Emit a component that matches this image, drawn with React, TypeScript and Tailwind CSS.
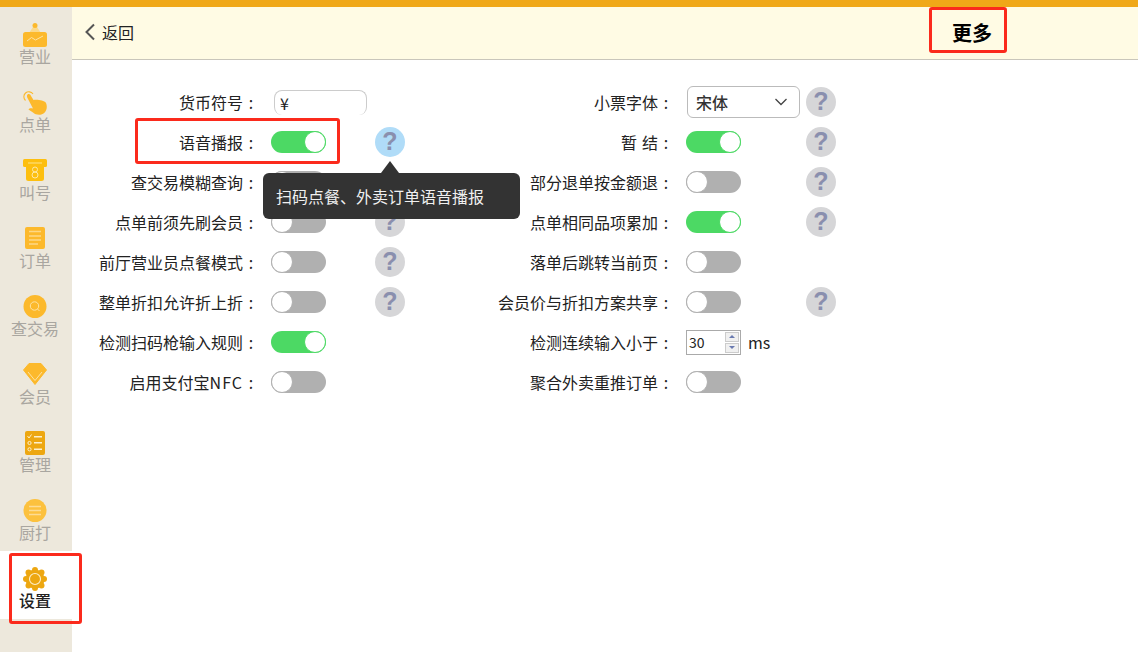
import React from 'react'

const FONT = '[font-family:"Noto_Sans_CJK_SC","Liberation_Sans",sans-serif]'

// sidebar icons, all on a 24 box
function IconBiz() {
  return (
    <svg width="24" height="24" viewBox="0 0 24 24">
      <path d="M12 1 L6 10 H18 Z" fill="#fbd98a" />
      <circle cx="12" cy="2.500" r="2.500" fill="#fcb92c" />
      <rect x="0" y="9" width="24" height="15" rx="2.500" fill="#fcb92c" />
      <path d="M4 18 L8.500 14.500 L12.500 17 L20 13" stroke="#fde3a4" strokeWidth="1" fill="none" />
    </svg>
  )
}

function IconHand() {
  return (
    <svg width="24" height="24" viewBox="0 0 24 24">
      <path d="M2.500 9.500 A5 5 0 1 1 10 3" stroke="#fcb92c" strokeWidth="1.100" fill="none" />
      <path d="M4.500 3.500 C6 2.500 7.500 3.500 8 5 L10.500 9 C14 8.500 21 9 23 12 C24.500 15 24 20 20.500 22.500 C17.500 24.500 12.500 24 10 21.500 L5.500 18.500 C6 17 8.500 17 10 17.500 L5 8 C4 6.500 3.500 4.500 4.500 3.500 Z" fill="#fcb92c" />
    </svg>
  )
}

function IconCall() {
  return (
    <svg width="24" height="24" viewBox="0 0 24 24">
      <rect x="0" y="0" width="24" height="8" rx="1.500" fill="#fdbf0f" />
      <path d="M3 6 H21 V19.500 A2.500 2.500 0 0 1 18.500 22 H5.500 A2.500 2.500 0 0 1 3 19.500 Z" fill="#fdbf0f" />
      <path d="M5 4 H19" stroke="#fde48c" strokeWidth="1" />
      <circle cx="12" cy="10.500" r="2.500" stroke="#fde9a8" strokeWidth="1" fill="none" />
      <circle cx="12" cy="16" r="3" stroke="#fde9a8" strokeWidth="1" fill="none" />
    </svg>
  )
}

function IconOrder() {
  return (
    <svg width="24" height="24" viewBox="0 0 24 24">
      <rect x="2" y="0" width="20" height="22" rx="2" fill="#fcb92c" />
      <path d="M6 4.500 H18 M6 9 H18 M6 13 H18 M6 17 H15" stroke="#fdd886" strokeWidth="1.300" />
    </svg>
  )
}

function IconSearch() {
  return (
    <svg width="24" height="24" viewBox="0 0 24 24">
      <circle cx="12" cy="11.500" r="11.500" fill="#fcb92c" />
      <circle cx="11.500" cy="11" r="4.200" stroke="#fde3a4" strokeWidth="1" fill="none" />
      <path d="M14.500 14 L16.500 16" stroke="#fde3a4" strokeWidth="1" />
    </svg>
  )
}

function IconDiamond() {
  return (
    <svg width="24" height="24" viewBox="0 0 24 24">
      <path d="M6 0.500 H18 L23.500 7 L12 21.500 L0.500 7 Z" fill="#fcb92c" stroke="#fcb92c" strokeLinejoin="round" />
      <path d="M5 9 L12 17.500 L19 9" stroke="#fde3a4" strokeWidth="1" fill="none" />
    </svg>
  )
}

function IconManage() {
  return (
    <svg width="24" height="24" viewBox="0 0 24 24">
      <rect x="2" y="0" width="20" height="24" rx="2" fill="#eda711" />
      <path d="M4.500 5 L6 7 L8.500 3.500" stroke="#fdf0cc" strokeWidth="1" fill="none" />
      <circle cx="6.500" cy="12" r="1.600" stroke="#fdf0cc" strokeWidth="1" fill="none" />
      <circle cx="6.500" cy="18.300" r="1.600" stroke="#fdf0cc" strokeWidth="1" fill="none" />
      <path d="M11 5.700 H19 M11 11.700 H19 M11 18.300 H19" stroke="#fdf0cc" strokeWidth="1.500" />
    </svg>
  )
}

function IconPrint() {
  return (
    <svg width="24" height="24" viewBox="0 0 24 24">
      <circle cx="12" cy="11.500" r="11.500" fill="#fcc13e" />
      <path d="M6 7.500 H18 M6 11.500 H18 M6 15.500 H18" stroke="#fddc94" strokeWidth="1.400" />
    </svg>
  )
}

function IconGear() {
  return (
    <svg width="24" height="24" viewBox="0 0 24 24">
      <g fill="#eda711">
        <circle cx="12" cy="12" r="9.500" />
        <circle cx="12" cy="3" r="3" />
        <circle cx="12" cy="21" r="3" />
        <circle cx="3" cy="12" r="3" />
        <circle cx="21" cy="12" r="3" />
        <circle cx="5.500" cy="5.500" r="3" />
        <circle cx="18.500" cy="5.500" r="3" />
        <circle cx="5.500" cy="18.500" r="3" />
        <circle cx="18.500" cy="18.500" r="3" />
      </g>
      <circle cx="12" cy="12" r="5.500" fill="none" stroke="#fdf0cc" strokeWidth="1.100" />
    </svg>
  )
}

const navItems = [
  { label: '营业', icon: <IconBiz /> },
  { label: '点单', icon: <IconHand /> },
  { label: '叫号', icon: <IconCall /> },
  { label: '订单', icon: <IconOrder /> },
  { label: '查交易', icon: <IconSearch /> },
  { label: '会员', icon: <IconDiamond /> },
  { label: '管理', icon: <IconManage /> },
  { label: '厨打', icon: <IconPrint /> },
  { label: '设置', icon: <IconGear />, active: true },
]

function Toggle({ on }: { on?: boolean }) {
  return (
    <div className={on ? 'flex h-[22px] w-[55px] justify-end rounded-full bg-[#4cd964]' : 'flex h-[22px] w-[55px] justify-start rounded-full bg-[#b0b0b0]'}>
      <div className={on ? 'h-[22px] w-[22px] rounded-full border border-[#4cd964] bg-white' : 'h-[22px] w-[22px] rounded-full border border-[#b0b0b0] bg-white'} />
    </div>
  )
}

function Help({ active }: { active?: boolean }) {
  return (
    <div className={active ? 'flex h-[30px] w-[30px] items-center justify-center rounded-full bg-[#b0dcf8] font-["Liberation_Sans"] text-[25px] font-bold text-[#8a8fae]' : 'flex h-[30px] w-[30px] items-center justify-center rounded-full bg-[#d6d6d8] font-["Liberation_Sans"] text-[25px] font-bold text-[#8a8fae]'}>
      ?
    </div>
  )
}

function Row({ label, control, help, wide, helpActive }: { label: React.ReactNode; control: React.ReactNode; help?: boolean; wide?: boolean; helpActive?: boolean }) {
  return (
    <div className="flex h-10 items-center">
      <div className={wide ? 'flex w-[176px] justify-end whitespace-pre text-[16px] text-[#222]' : 'flex w-[160px] justify-end whitespace-pre text-[16px] text-[#222]'}>
        <span>{label}</span>
        <span className="w-4 text-center">:</span>
      </div>
      <div className={wide ? 'ml-3 w-[120px] shrink-0' : 'ml-3 w-[104px] shrink-0'}>{control}</div>
      {help && <Help active={helpActive} />}
    </div>
  )
}

export default function App() {
  return (
    <div className={`relative flex h-[652px] w-[1138px] flex-col overflow-hidden bg-white ${FONT}`}>
      <div className="h-[7px] shrink-0 bg-[#f0a818]" />
      <div className="flex flex-1">
        <aside className="flex w-[72px] shrink-0 flex-col bg-[#ede8dc]">
          {navItems.map((item) => (
            <div key={item.label} className={item.active ? 'flex h-[68px] flex-col items-center bg-white pr-[2px] pt-4' : 'flex h-[68px] flex-col items-center pr-[2px] pt-4'}>
              <div className="h-6 w-6">{item.icon}</div>
              <div className={item.active ? 'mt-[-3px] text-[16px] font-medium leading-6 text-[#222]' : 'mt-[-3px] text-[16px] leading-6 text-[#a9a6a0]'}>
                {item.label}
              </div>
            </div>
          ))}
        </aside>

        <main className="flex-1">
          <header className="flex h-[53px] items-center border-b border-[#c9c6bb] bg-[#fffbe4]">
            <svg width="12" height="18" viewBox="0 0 12 18" className="ml-[12px] -mt-[2px]">
              <path d="M10 1.500 L2.500 9 L10 16.500" stroke="#555" strokeWidth="2" fill="none" />
            </svg>
            <span className="ml-[6px] -mt-[3px] text-[16px] text-[#222]">返回</span>
            <span className="ml-[818px] text-[20px] font-bold text-black">更多</span>
          </header>

          <div className="relative flex pl-[27px] pt-[22px]">
            <div className="w-[399px]">
              <Row
                label="货币符号"
                control={
                  <div className="ml-[3px] flex h-[25px] w-[93px] items-center rounded-lg border border-b-0 border-[#ccc] pl-[5px] text-[16px] text-[#222]">
                    ¥
                  </div>
                }
              />
              <Row label="语音播报" control={<Toggle on />} help helpActive />
              <Row label="查交易模糊查询" control={<Toggle />} />
              <Row label="点单前须先刷会员" control={<Toggle />} help />
              <Row label="前厅营业员点餐模式" control={<Toggle />} help />
              <Row label="整单折扣允许折上折" control={<Toggle />} help />
              <Row label="检测扫码枪输入规则" control={<Toggle on />} />
              <Row label={<>启用支付宝<span className="tracking-[1px]">NFC</span></>} control={<Toggle />} />
            </div>
            <div>
              <Row
                wide
                label="小票字体"
                control={
                  <div className="ml-px flex h-8 w-[113px] items-center justify-between rounded-md border border-[#bbb] px-2 text-[16px] font-medium text-[#333]">
                    宋体
                    <svg width="14" height="8" viewBox="0 0 14 8" className="mr-[3px]">
                      <path d="M1.500 1 L7 6.500 L12.500 1" stroke="#444" strokeWidth="1.300" fill="none" />
                    </svg>
                  </div>
                }
                help
              />
              <Row wide label={<>暂<span className="ml-[5px]">结</span></>} control={<Toggle on />} help />
              <Row wide label="部分退单按金额退" control={<Toggle />} help />
              <Row wide label="点单相同品项累加" control={<Toggle on />} help />
              <Row wide label="落单后跳转当前页" control={<Toggle />} />
              <Row wide label="会员价与折扣方案共享" control={<Toggle />} help />
              <Row
                wide
                label="检测连续输入小于"
                control={
                  <div className="flex items-center">
                    <div className="flex h-[25px] w-[55px] items-center justify-between border border-[#aaa] pl-[2px] pr-px text-[14px] text-[#222]">
                      30
                      <div className="flex w-[14px] flex-col gap-px">
                        <div className="flex h-[10px] items-center justify-center border border-[#ccc] bg-[#f0f0f0]">
                          <div className="border-x-[3px] border-b-[3px] border-x-transparent border-b-[#6a7ab0]" />
                        </div>
                        <div className="flex h-[10px] items-center justify-center border border-[#ccc] bg-[#f0f0f0]">
                          <div className="border-x-[3px] border-t-[3px] border-x-transparent border-t-[#6a7ab0]" />
                        </div>
                      </div>
                    </div>
                    <span className="ml-[7px] text-[16px] text-[#222]">ms</span>
                  </div>
                }
              />
              <Row wide label="聚合外卖重推订单" control={<Toggle />} />
            </div>

            {/* tooltip over the rows */}
            <div className="absolute left-[191px] top-[113px] flex h-[46px] w-[257px] items-center rounded-md bg-[#333] pl-[13px] text-[16px] text-[#f0f0f0]">
              扫码点餐、外卖订单语音播报
              <div className="absolute left-[118px] top-[-12px] border-x-[9px] border-b-[12px] border-x-transparent border-b-[#333]" />
            </div>
          </div>
        </main>
      </div>

      {/* red annotation frames */}
      <div className="absolute left-[135px] top-[118px] h-[46px] w-[205px] rounded-[3px] border-[3px] border-[#fb2a1c]" />
      <div className="absolute left-[929px] top-[7px] h-[46px] w-[78px] rounded-[3px] border-[3px] border-[#fb2a1c]" />
      <div className="absolute left-[9px] top-[553px] h-[71px] w-[73px] rounded-[3px] border-[3px] border-[#fb2a1c]" />
    </div>
  )
}
